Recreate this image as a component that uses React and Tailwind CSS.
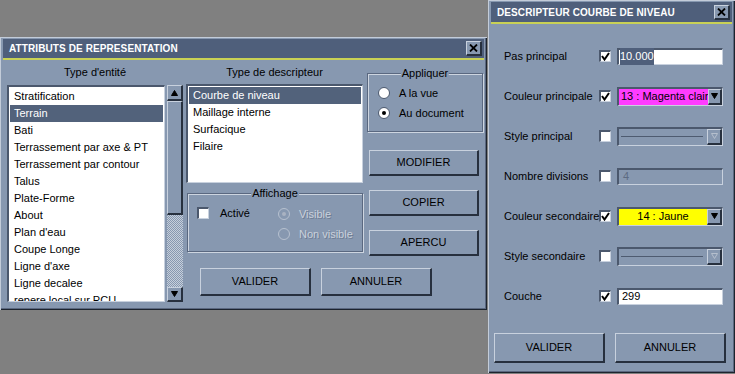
import React from 'react';

const BG = 'bg-[#8798b0]';

const Raised = 'border-t border-l border-t-[#c8d1de] border-l-[#c8d1de] border-b-2 border-r-2 border-b-[#27303e] border-r-[#27303e]';
const Sunken = 'border-t-2 border-l-2 border-t-[#4b586d] border-l-[#4b586d] border-b border-r border-b-[#c8d1de] border-r-[#c8d1de]';

const Check = ({ checked }) => (
    <div className={`w-[12px] h-[12px] bg-white shrink-0 relative z-10 flex items-center justify-center ${Sunken}`}>
        {checked && (
            <svg width="9" height="9" viewBox="0 0 9 9">
                <path d="M1 4 L3.5 7.5 L8 1" stroke="#000" strokeWidth="2" fill="none" />
            </svg>
        )}
    </div>
);

const Radio = ({ checked, disabled }) => (
    <svg width="12" height="12" viewBox="0 0 12 12" className="shrink-0">
        <circle cx="6" cy="6" r="5.5" fill={disabled ? '#8798b0' : '#fff'} stroke={disabled ? '#b7c1cf' : '#4b586d'} strokeWidth="1" />
        {checked && <circle cx="6" cy="6" r="2" fill={disabled ? '#a9b3c2' : '#000'} />}
    </svg>
);

const Button = ({ label, w, h }) => (
    <div className={`${w} ${h} ${BG} ${Raised} flex items-center justify-center text-black`}>{label}</div>
);

const CloseBtn = () => (
    <div className={`w-[16px] h-[15px] ${BG} ${Raised} flex items-center justify-center`}>
        <svg width="9" height="8" viewBox="0 0 9 8">
            <path d="M1 0.5 L8 7.5 M8 0.5 L1 7.5" stroke="#000" strokeWidth="1.8" />
        </svg>
    </div>
);

const TitleBar = ({ title, h }) => (
    <div className="mx-[3px] mt-[2px]">
        <div className={`${h} bg-[#4f5f7b] flex items-center justify-between pl-[6px] pr-[2px]`}>
            <span className="text-white font-bold text-[10px] tracking-[0.1px]">{title}</span>
            <CloseBtn />
        </div>
        <div className="h-[2px] bg-[#c9d155]" />
    </div>
);

const GroupBox = ({ legend, className, children }) => (
    <div className={`relative border border-[#5a6880] shadow-[inset_1px_1px_0_#cdd5e0,1px_1px_0_#cdd5e0] ${className}`}>
        <span className={`absolute -top-[8px] left-1/2 -translate-x-1/2 px-[1px] ${BG} leading-[14px]`}>{legend}</span>
        {children}
    </div>
);

const Arrow = ({ dir = 'down', hollow }) => (
    <svg width="7" height="6" viewBox="0 0 7 6">
        {dir === 'down'
            ? <path d="M0.5 0.5 L6.5 0.5 L3.5 5.5 Z" fill={hollow ? 'none' : '#000'} stroke={hollow ? '#b5bfcd' : '#000'} strokeWidth="1" />
            : <path d="M0.5 5.5 L6.5 5.5 L3.5 0.5 Z" fill="#000" stroke="#000" strokeWidth="1" />}
    </svg>
);

const entities = ['Stratification', 'Terrain', 'Bati', 'Terrassement par axe & PT', 'Terrassement par contour', 'Talus', 'Plate-Forme', 'About', "Plan d'eau", 'Coupe Longe', "Ligne d'axe", 'Ligne decalee', 'repere local sur PCU'];
const descriptors = ['Courbe de niveau', 'Maillage interne', 'Surfacique', 'Filaire'];

const ListRows = ({ items, selected }) => (
    <div className="pt-[1px] px-[1px]">
        {items.map((t, i) => (
            <div key={i} className={`h-[17px] leading-[17px] pl-[4px] whitespace-nowrap ${i === selected ? 'bg-[#52627b] text-white' : 'text-black'}`}>{t}</div>
        ))}
    </div>
);

const Disabled = 'text-[#cad1dc] [text-shadow:1px_1px_0_#6d7b92]';

const LeftWindow = () => (
    <div className={`absolute left-0 top-[37px] w-[487px] h-[273px] ${BG} shadow-[inset_1px_1px_0_#c3ccd9,inset_-1px_-1px_0_#1d242e,inset_-2px_-2px_0_#5b6880]`}>
        <TitleBar title="ATTRIBUTS DE REPRESENTATION" h="h-[19px]" />
        <div className="flex pl-[7px]">
            {/* Type d'entité */}
            <div className="w-[176px] flex flex-col">
                <div className="h-[20px] mt-[2px] flex items-center justify-center">Type d'entité</div>
                <div className="flex mt-[3px] h-[217px]">
                    <div className={`w-[158px] h-full bg-white overflow-hidden ${Sunken}`}>
                        <ListRows items={entities} selected={1} />
                    </div>
                    <div className="w-[16px] ml-[2px] flex flex-col bg-[#27303e]">
                        <div className={`h-[16px] ${BG} ${Raised} flex items-center justify-center`}><Arrow dir="up" /></div>
                        <div className={`h-[114px] ${BG} ${Raised}`} />
                        <div className="h-[72px] bg-[repeating-conic-gradient(#c6cfdb_0_25%,#8798b0_0_50%)] bg-[length:2px_2px]" />
                        <div className={`h-[15px] ${BG} ${Raised} flex items-center justify-center`}><Arrow /></div>
                    </div>
                </div>
            </div>

            <div className="ml-[3px] flex flex-col">
                <div className="flex">
                    {/* Type de descripteur */}
                    <div className="w-[177px] flex flex-col">
                        <div className="h-[20px] mt-[2px] flex items-center justify-center">Type de descripteur</div>
                        <div className={`mt-[2px] h-[99px] bg-white overflow-hidden ${Sunken}`}>
                            <ListRows items={descriptors} selected={0} />
                        </div>
                        <GroupBox legend="Affichage" className="mt-[10px] h-[59px] ml-[1px] w-[176px]">
                            <div className="flex pl-[9px] pt-[13px]">
                                <Check />
                                <span className="ml-[11px] -mt-[2px]">Activé</span>
                                <div className="ml-[28px] flex flex-col gap-[6px]">
                                    <div className="h-[14px] flex items-center gap-[9px]"><Radio checked disabled /><span className={Disabled}>Visible</span></div>
                                    <div className="h-[14px] flex items-center gap-[9px]"><Radio disabled /><span className={Disabled}>Non visible</span></div>
                                </div>
                            </div>
                        </GroupBox>
                    </div>

                    {/* Appliquer + buttons */}
                    <div className="ml-[4px] w-[116px] flex flex-col">
                        <GroupBox legend="Appliquer" className="mt-[13px] h-[59px] w-[116px]">
                            <div className="flex flex-col pl-[10px] pt-[12px] gap-[6px]">
                                <div className="h-[14px] flex items-center gap-[9px]"><Radio /><span>A la vue</span></div>
                                <div className="h-[14px] flex items-center gap-[9px]"><Radio checked /><span>Au document</span></div>
                            </div>
                        </GroupBox>
                        <div className="ml-[2px] mt-[18px] flex flex-col gap-[14px]">
                            <Button label="MODIFIER" w="w-[110px]" h="h-[26px]" />
                            <Button label="COPIER" w="w-[110px]" h="h-[26px]" />
                            <Button label="APERCU" w="w-[110px]" h="h-[26px]" />
                        </div>
                    </div>
                </div>
                <div className="flex gap-[10px] ml-[14px] mt-[12px]">
                    <Button label="VALIDER" w="w-[111px]" h="h-[28px]" />
                    <Button label="ANNULER" w="w-[111px]" h="h-[28px]" />
                </div>
            </div>
        </div>
    </div>
);

const Combo = ({ bg, text, center, disabled }) => (
    <div className={`w-[106px] h-[19px] flex ${Sunken} ${disabled ? BG : ''}`}>
        <div className={`flex-1 flex items-center ${bg || ''} ${center ? 'justify-center' : 'pl-[2px]'}`}>
            {disabled ? <div className="w-full h-px bg-[#4e5b70] mr-[4px]" /> : <span className="whitespace-nowrap">{text}</span>}
        </div>
        <div className={`w-[15px] ${BG} ${Raised} flex items-center justify-center`}>
            <Arrow hollow={disabled} />
        </div>
    </div>
);

const Field = ({ children, disabled }) => (
    <div className={`w-[106px] h-[17px] flex items-center pl-[1px] ${Sunken} ${disabled ? BG : 'bg-white'}`}>{children}</div>
);

const Row = ({ label, checked, children }) => (
    <div className="h-[40px] flex items-center pl-[16px]">
        <span className="w-[95px] whitespace-nowrap overflow-visible">{label}</span>
        <Check checked={checked} />
        <div className="ml-[6px]">{children}</div>
    </div>
);

const RightWindow = () => (
    <div className={`absolute left-[488px] top-0 w-[247px] h-[373px] ${BG} shadow-[inset_1px_1px_0_#c3ccd9,inset_-1px_-1px_0_#1d242e,inset_-2px_-2px_0_#5b6880]`}>
        <TitleBar title="DESCRIPTEUR COURBE DE NIVEAU" h="h-[20px]" />
        <div className="mt-[12px] flex flex-col">
            <Row label="Pas principal" checked>
                <Field><span className="bg-[#4f5f7b] text-white">10.000</span></Field>
            </Row>
            <Row label="Couleur principale" checked>
                <Combo bg="bg-[#ff3cff]" text="13 : Magenta clair" />
            </Row>
            <Row label="Style principal">
                <Combo disabled />
            </Row>
            <Row label="Nombre divisions">
                <Field disabled><span className="text-[#5d6b82] pl-[3px]">4</span></Field>
            </Row>
            <Row label="Couleur secondaire" checked>
                <Combo bg="bg-[#ffff00]" text="14 : Jaune" center />
            </Row>
            <Row label="Style secondaire">
                <Combo disabled />
            </Row>
            <Row label="Couche" checked>
                <Field><span className="pl-[2px]">299</span></Field>
            </Row>
        </div>
        <div className="flex gap-[10px] pl-[6px] mt-[17px]">
            <Button label="VALIDER" w="w-[111px]" h="h-[30px]" />
            <Button label="ANNULER" w="w-[111px]" h="h-[30px]" />
        </div>
    </div>
);

export default function App() {
    return (
        <div className="relative w-[735px] h-[374px] bg-[#808080] overflow-hidden font-['Liberation_Sans',Arial,sans-serif] text-[11px] text-black">
            <LeftWindow />
            <RightWindow />
        </div>
    );
}
